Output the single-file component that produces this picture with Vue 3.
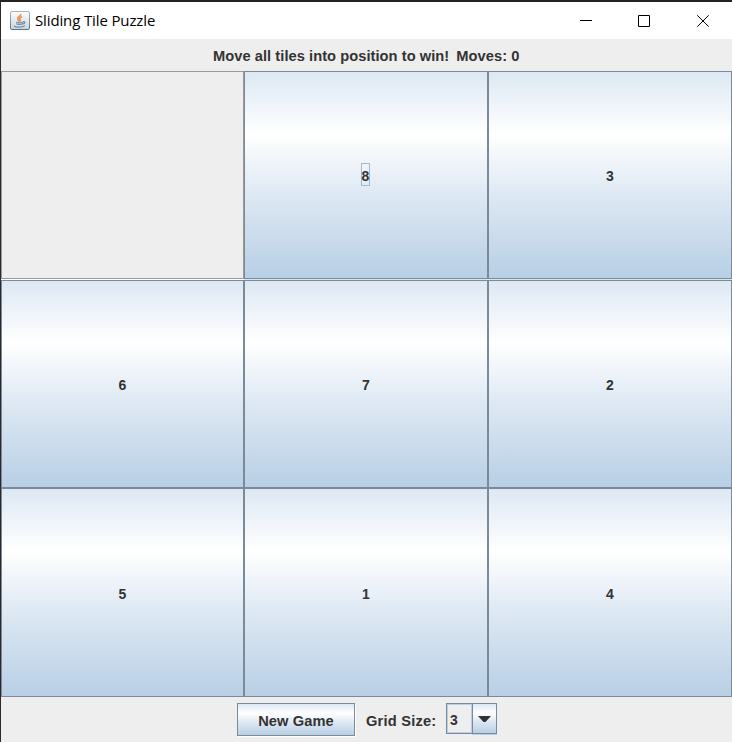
<script setup>
import { ref, computed } from 'vue'

const size = ref(3)
const moves = ref(0)
const tiles = ref([0, 8, 3, 6, 7, 2, 5, 1, 4])
const focused = ref(8)
const blank = computed(() => tiles.value.indexOf(0))

function slide(i) {
  const b = blank.value
  const dx = Math.abs((i % size.value) - (b % size.value))
  const dy = Math.abs(Math.floor(i / size.value) - Math.floor(b / size.value))
  if (dx + dy !== 1) return
  focused.value = tiles.value[i]
  tiles.value[b] = tiles.value[i]
  tiles.value[i] = 0
  moves.value++
}

function newGame() {
  tiles.value = [0, 8, 3, 6, 7, 2, 5, 1, 4]
  moves.value = 0
}
</script>

<template>
  <div class="window">
    <header class="titlebar">
      <svg class="logo" width="20" height="20" viewBox="0 0 20 20">
        <defs>
          <linearGradient id="plate" x1="0" y1="0" x2="0" y2="1">
            <stop offset="0" stop-color="#fdfdfd" />
            <stop offset="1" stop-color="#ccd4dc" />
          </linearGradient>
          <linearGradient id="rim" x1="0" y1="0" x2="0" y2="1">
            <stop offset="0" stop-color="#a9b4bf" />
            <stop offset="1" stop-color="#58758f" />
          </linearGradient>
        </defs>
        <rect x=".5" y=".5" width="19" height="18" rx="1.5" fill="url(#plate)" stroke="url(#rim)" />
        <path d="M10.8 3C11.2 5 7.3 5.8 7.7 7.8C7.9 8.8 9 9.4 9.3 10.3M12.2 5.8C9.5 6.8 9.2 7.7 10 8.6C10.5 9.2 10.3 9.8 9.8 10.3" fill="none" stroke="#ee8f48" stroke-width="1.6" />
        <path d="M6 10.8H13V12.8Q12.7 14 11 14H8Q6.5 14 6.3 12.8Z" fill="#7893ab" />
        <path d="M6.8 12.3H12.3" stroke="#c7d3df" stroke-width=".7" />
        <path d="M13 10.8C15.6 10.2 15.3 12.8 12.7 13M4 14.8C5.5 16.6 13 16.5 14.8 14.7" fill="none" stroke="#718ca5" stroke-width="1.2" />
      </svg>
      <span class="title">Sliding Tile Puzzle</span>
      <div class="controls">
        <svg width="12" height="12" viewBox="0 0 12 12"><path d="M0 5.5H12" /></svg>
        <svg width="12" height="12" viewBox="0 0 12 12"><path d="M.5 .5H11.5V11.5H.5Z" /></svg>
        <svg class="close" width="12" height="12" viewBox="0 0 12 12"><path d="M.3 .3L11.7 11.7M11.7 .3L.3 11.7" /></svg>
      </div>
    </header>
    <div class="status">
      <span class="message">Move all tiles into position to win!</span>
      <span class="moves">Moves: {{ moves }}</span>
    </div>
    <main class="board">
      <button
        v-for="(n, i) in tiles"
        :key="n"
        class="tile"
        :class="{ blank: n === 0 }"
        @click="slide(i)"
      >
        <span v-if="n" :class="{ focus: n === focused }">{{ n }}</span>
      </button>
    </main>
    <footer class="toolbar">
      <button class="new-game" @click="newGame"><span>New Game</span></button>
      <span class="label">Grid Size:</span>
      <div class="combo">
        <div class="value">{{ size }}</div>
        <div class="arrow">
          <svg width="13" height="6" viewBox="0 0 13 6"><path d="M0 0H13L7.5 6H5.5Z" fill="#333" /></svg>
        </div>
      </div>
    </footer>
  </div>
</template>

<style>
body {
  margin: 0;
  background: #eee;
}
</style>

<style scoped>
.window {
  box-sizing: border-box;
  width: 732px;
  height: 742px;
  border-top: 2px solid #252324;
  border-left: 1px solid #2b292c;
  background: #eee;
  color: #333;
  font: bold 14.67px/20px "Liberation Sans", Arial, sans-serif;
  display: flex;
  flex-direction: column;
  overflow: hidden;
}
.titlebar {
  height: 37px;
  background: #fff;
  display: flex;
  align-items: center;
  padding-left: 9px;
}
.logo {
  display: block;
}
.title {
  margin-left: 5px;
  padding-bottom: 2px;
  color: #000;
  font: 15px/20px "Open Sans", sans-serif;
  letter-spacing: -0.13px;
  white-space: nowrap;
}
.controls {
  margin-left: auto;
  display: flex;
  gap: 46px;
  padding-right: 23px;
}
.controls svg {
  display: block;
  fill: none;
  stroke: #000;
  stroke-width: 1;
}
.controls .close {
  margin-left: 1px;
}
.status {
  height: 32px;
  display: flex;
  align-items: center;
  padding-left: 212px;
  padding-top: 2px;
  box-sizing: border-box;
  white-space: pre;
  letter-spacing: 0.05px;
}
.moves {
  margin-left: 7px;
}
.board {
  display: grid;
  grid-template-columns: 243px 244px 244px;
  grid-template-rows: 209px 208px 209px;
}
button {
  margin: 0;
  padding: 0;
  color: inherit;
  font: inherit;
  border-radius: 0;
}
.tile,
.new-game,
.arrow {
  box-sizing: border-box;
  border: 1px solid #7a8a99;
  background: linear-gradient(#dde8f3, #fff 30%, #dde8f3 60%, #b8cfe5);
  display: flex;
  align-items: center;
  justify-content: center;
}
.tile:nth-child(-n + 3) {
  height: 208px;
  box-shadow: 0 1px #dce6ef;
}
.tile.blank {
  background: #eee;
  border-color: #999;
  box-shadow: 0 1px #fff;
}
.tile span {
  display: block;
  font-size: 14px;
  line-height: 21px;
  padding-top: 3px;
}
.tile .focus {
  box-sizing: border-box;
  width: 9px;
  height: 23px;
  margin: 0 1px 2px 0;
  padding: 0;
  line-height: 25px;
  border: 1px solid #a3b8cc;
  display: flex;
  justify-content: center;
}
.toolbar {
  height: 45px;
  display: flex;
  padding: 6px 0 0 236px;
  box-sizing: border-box;
}
.new-game {
  width: 118px;
  height: 33px;
  box-shadow: 1px 1px #fff;
}
.new-game span {
  padding-top: 2px;
  letter-spacing: 0.1px;
}
.label {
  width: 80px;
  margin-left: 11px;
  line-height: 37px;
  letter-spacing: 0.2px;
  white-space: nowrap;
}
.combo {
  display: flex;
  width: 51px;
  height: 31px;
}
.value {
  box-sizing: border-box;
  width: 26px;
  height: 31px;
  border: 1px solid #7a8a99;
  border-right: 0;
  box-shadow: inset 0 1px #b8cfe5, inset -1px 0 #b8cfe5, inset 0 -1px #b8cfe5, inset 1px 0 #b8cfe5;
  padding-left: 3px;
  font-size: 14px;
  line-height: 33px;
}
.arrow {
  width: 25px;
  height: 31px;
  padding: 1px 1px 0 0;
  box-shadow: 0 1px #b8cfe5;
}
</style>
